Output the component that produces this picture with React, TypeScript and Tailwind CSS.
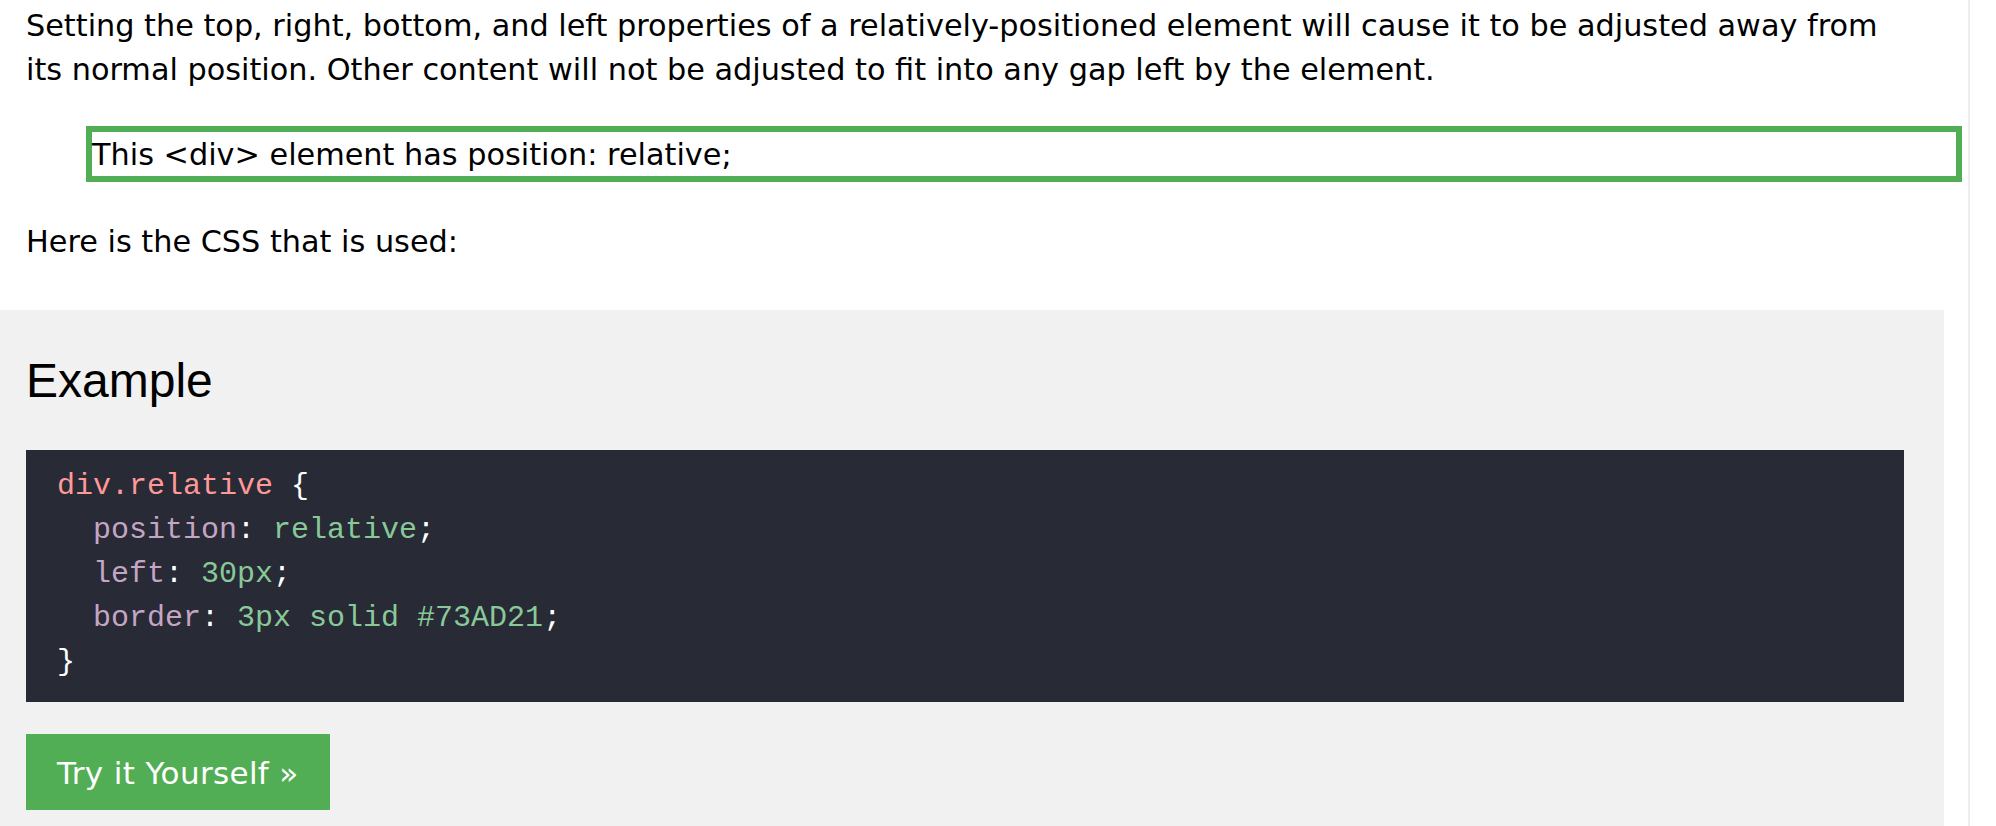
import React from "react";

const sans = { fontFamily: '"DejaVu Sans", Verdana, sans-serif' };

export default function App() {
  return (
    <div className="flex w-[1996px] h-[826px] overflow-hidden bg-white text-black">
      <div className="w-[1970px] shrink-0 border-r-2 border-[#eeeeee] flex flex-col">
        <div className="pl-[26px] pr-[66px] pt-[4px] text-[30.3px] leading-[44px]" style={sans}>
          <p>
            Setting the top, right, bottom, and left properties of a relatively-positioned element will cause it to be adjusted away from its normal position. Other content will not be adjusted to fit into any gap left by the element.
          </p>
          <div className="relative left-[60px] mt-[34px] border-[6px] border-[#52ae55] pt-[2px] leading-[42px]">
            This &lt;div&gt; element has position: relative;
          </div>
          <p className="mt-[38px]">Here is the CSS that is used:</p>
        </div>
        <div className="mt-[46px] mr-[24px] bg-[#f1f1f1] pl-[26px] pr-[40px] pt-[44px] pb-[20px] flex-1">
          <h2
            className="text-[48px] leading-[54px] font-normal"
            style={{ fontFamily: '"Liberation Sans", Arial, sans-serif' }}
          >
            Example
          </h2>
          <div
            className="mt-[42px] bg-[#282a35] pl-[31px] pt-[14px] pb-[18px] text-[30px] leading-[44px] text-white whitespace-pre"
            style={{ fontFamily: '"Courier New", Courier, "Nimbus Mono PS", "Nimbus Mono L", FreeMono, "Liberation Mono", monospace' }}
          >
            <div>
              <span className="text-[#ff9999]">div.relative</span>
              <span> {"{"}</span>
            </div>
            <div>
              {"  "}
              <span className="text-[#c5a5c5]">position</span>: <span className="text-[#88c999]">relative</span>;
            </div>
            <div>
              {"  "}
              <span className="text-[#c5a5c5]">left</span>: <span className="text-[#88c999]">30px</span>;
            </div>
            <div>
              {"  "}
              <span className="text-[#c5a5c5]">border</span>: <span className="text-[#88c999]">3px solid #73AD21</span>;
            </div>
            <div>{"}"}</div>
          </div>
          <div className="mt-[32px] flex">
            <a
              className="block w-[304px] whitespace-nowrap bg-[#52ae55] text-white text-[31px] tracking-[0.35px] leading-[44px] pl-[31px] pt-[17px] pb-[15px]"
              style={sans}
            >
              Try it Yourself »
            </a>
          </div>
        </div>
      </div>
      <div className="flex-1 bg-white" />
    </div>
  );
}
